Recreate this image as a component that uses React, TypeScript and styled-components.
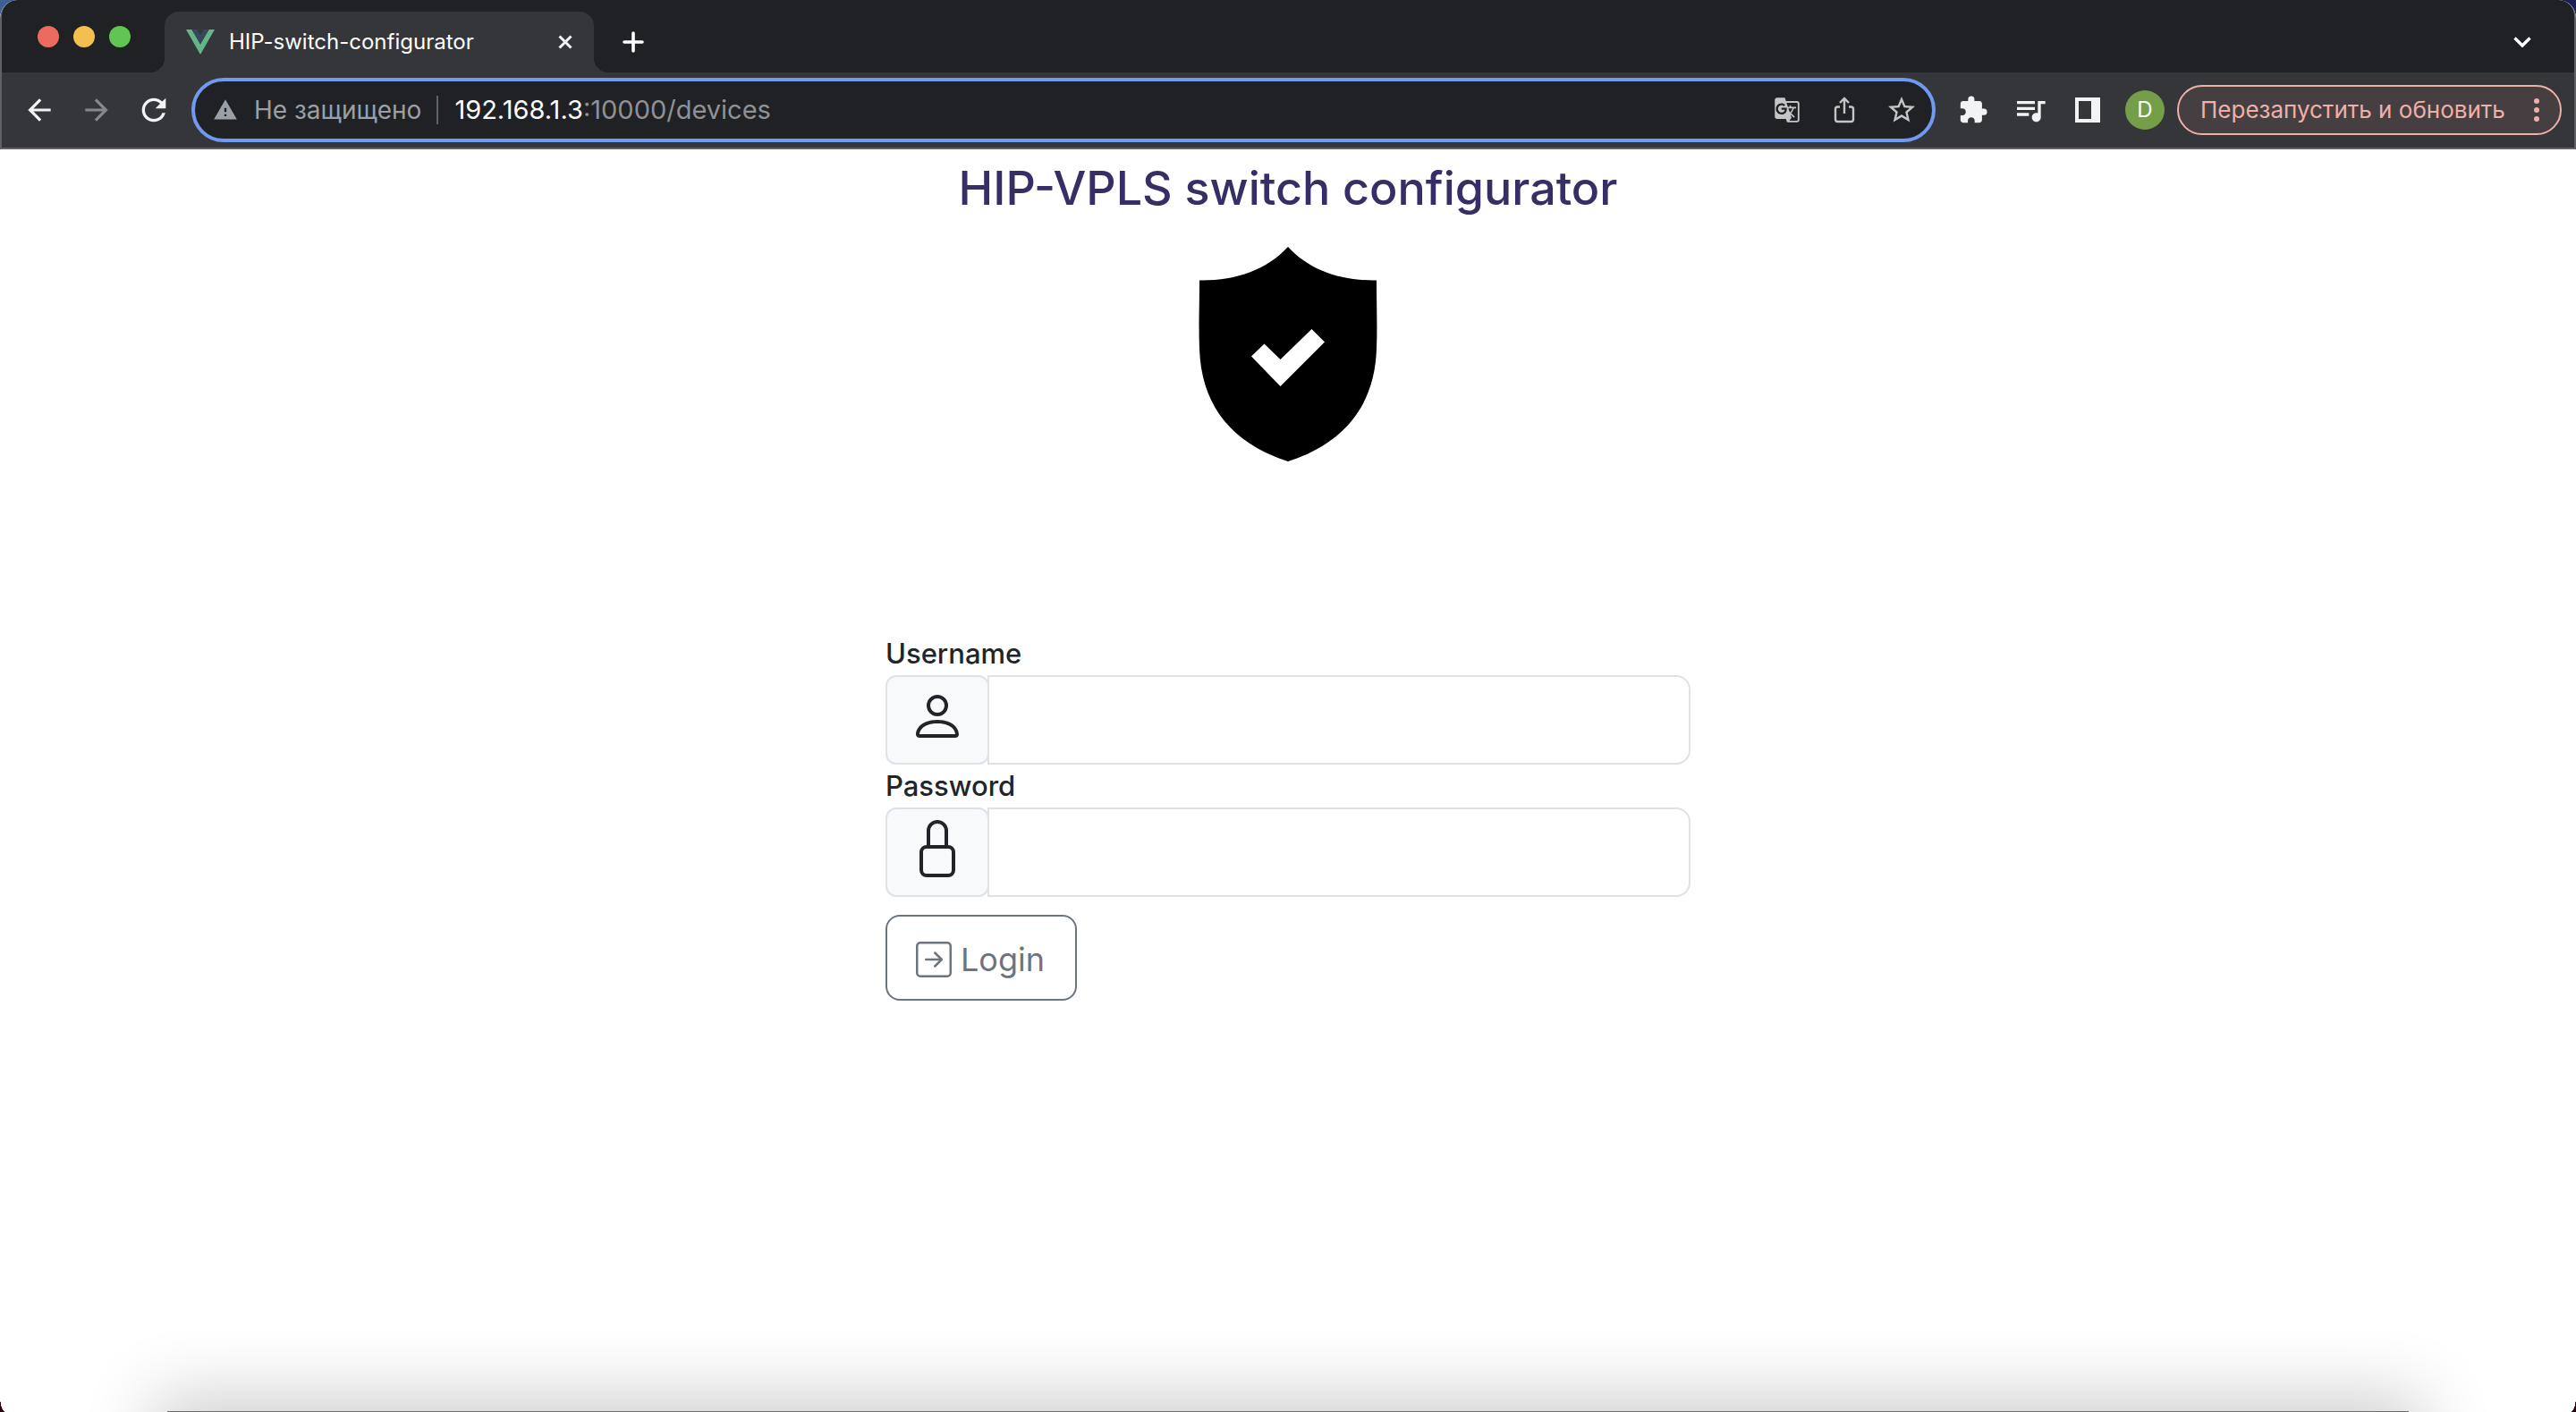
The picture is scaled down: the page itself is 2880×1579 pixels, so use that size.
import React from "react";
import styled, { createGlobalStyle, css } from "styled-components";
import { BsPerson, BsLock, BsArrowRightSquare } from "react-icons/bs";
import {
  MdArrowBack,
  MdArrowForward,
  MdRefresh,
  MdExtension,
  MdStarOutline,
  MdGTranslate,
  MdWarning,
  MdOutlineQueueMusic,
} from "react-icons/md";

const GlobalStyle = createGlobalStyle`
  *, *::before, *::after { box-sizing: border-box; }
  body {
    margin: 0;
    background: linear-gradient(90deg, #3c5f94 0%, #1c1f52 100%);
    font-family: Inter, "Liberation Sans", sans-serif;
  }
  button, input { font: inherit; }
`;

const Window = styled.div`
  position: relative;
  display: flex;
  flex-direction: column;
  min-height: 100vh;
  overflow: hidden;
  background: #fff;
  border-radius: 20px 20px 0 0;
`;

const Chrome = styled.header`
  background: #35363a;
  border: 2px solid #5f6165;
  border-top-width: 0;
  border-radius: 20px 20px 0 0;
`;

const TabStrip = styled.div`
  display: flex;
  align-items: flex-end;
  height: 81px;
  padding: 0 40px;
  background: #202124;
  border-radius: 18px 18px 0 0;
`;

const Lights = styled.div`
  display: flex;
  align-items: center;
  gap: 16px;
  height: 80px;
  margin-right: 38px;
`;

const Light = styled.button<{ $color: string }>`
  width: 24px;
  height: 24px;
  padding: 0;
  border: 0;
  border-radius: 50%;
  background: ${(p) => p.$color};
`;

const flare = css`
  content: "";
  position: absolute;
  bottom: 0;
  width: 16px;
  height: 16px;
`;

const Tab = styled.div`
  position: relative;
  display: flex;
  align-items: center;
  width: 480px;
  height: 68px;
  padding: 0 24px 0 24px;
  border-radius: 16px 16px 0 0;
  background: #35363a;
  color: #fff;
  &::before {
    ${flare}
    left: -16px;
    background: radial-gradient(circle at 0 0, transparent 16px, #35363a 16px);
  }
  &::after {
    ${flare}
    right: -16px;
    background: radial-gradient(circle at 100% 0, transparent 16px, #35363a 16px);
  }
`;

const TabTitle = styled.span`
  flex: 1;
  margin-left: 16px;
  font-size: 24px;
  line-height: 32px;
  white-space: nowrap;
`;

const IconButton = styled.button<{ $w?: number; $dim?: boolean }>`
  display: flex;
  flex: none;
  align-items: center;
  justify-content: center;
  width: ${(p) => p.$w ?? 64}px;
  height: 68px;
  padding: 0;
  border: 0;
  background: none;
  color: ${(p) => (p.$dim ? "#87888a" : "#f1f3f4")};
`;

const TabClose = styled(IconButton)`
  width: 16px;
  height: 32px;
`;

const StripSpacer = styled.div`
  flex: 1;
`;

const Toolbar = styled.div`
  display: flex;
  align-items: center;
  height: 84px;
  padding: 0 14px 0 10px;
`;

const Omnibox = styled.div`
  display: flex;
  flex: 1;
  align-items: center;
  height: 72px;
  margin: 0 10px 0 10px;
  padding: 0 2px 0 20px;
  border: 4px solid #709af0;
  border-radius: 36px;
  background: #202124;
  color: #9aa0a6;
  font-size: 28px;
  line-height: 36px;
`;

const Security = styled.span`
  margin-left: 18px;
  white-space: nowrap;
`;

const Divider = styled.span`
  width: 2px;
  height: 32px;
  margin: 0 18px 0 17px;
  background: #5f6368;
`;

const Address = styled.div`
  flex: 1;
  color: #909193;
  font-size: 29px;
  b {
    color: #fff;
    font-weight: 400;
  }
`;

const OmniAction = styled(IconButton)`
  color: #c4c5c6;
`;

const Avatar = styled.button`
  width: 44px;
  height: 44px;
  margin: 0 14px 0 10px;
  padding: 0;
  border: 0;
  border-radius: 50%;
  background: #759e48;
  color: #fff;
  font-size: 24px;
  line-height: 44px;
`;

const UpdateButton = styled.button`
  display: flex;
  align-items: center;
  justify-content: space-between;
  width: 430px;
  height: 56px;
  padding: 0 23px 0 24px;
  border: 2px solid #eeb0a9;
  border-radius: 28px;
  background: #453f42;
  color: #eeb0a9;
  font-size: 26px;
  line-height: 36px;
  white-space: nowrap;
`;

const Page = styled.main`
  display: flex;
  flex: 1;
  flex-direction: column;
  align-items: center;
  padding-top: 10px;
`;

const Title = styled.h1`
  margin: 0;
  color: #352f66;
  font-size: 52px;
  font-weight: 500;
  line-height: 68px;
`;

const Shield = styled.svg`
  display: block;
  width: 200px;
  height: 240px;
  margin: 31px 0 191px;
`;

const Form = styled.form`
  width: 900px;
  max-width: 100%;
  color: #212529;
`;

const Label = styled.label`
  display: block;
  font-size: 31px;
  font-weight: 500;
  line-height: 48px;
`;

const Group = styled.div`
  display: flex;
  height: 100px;
`;

const Addon = styled.span`
  flex: none;
  width: 116px;
  padding: 12px 24px;
  border: 2px solid #dee2e6;
  border-radius: 12px;
  background: #f8f9fa;
  svg { display: block; }
`;

const Field = styled.input`
  flex: 1;
  min-width: 0;
  margin-left: -2px;
  padding: 16px 32px;
  border: 2px solid #dee2e6;
  border-radius: 0 16px 16px 0;
  outline: 0;
  background: #fff;
  font-size: 40px;
`;

const LoginButton = styled.button`
  display: flex;
  align-items: center;
  gap: 10px;
  height: 96px;
  margin-top: 20px;
  padding: 4px 34px 0 32px;
  border: 2px solid #6c757d;
  border-radius: 16px;
  background: transparent;
  color: #6c757d;
  font-size: 36px;
  line-height: 60px;
`;

const DockShadow = styled.div`
  position: absolute;
  right: 187px;
  bottom: -99px;
  left: 187px;
  height: 100px;
  background: #6e6e6e;
  box-shadow: 0 0 80px 16px rgba(0, 0, 0, 0.2);
`;

const Corner = styled.span<{ $side: "left" | "right" }>`
  position: absolute;
  bottom: 0;
  ${(p) => p.$side}: 0;
  width: 6px;
  height: 18px;
  background: radial-gradient(
    ellipse 6px 18px at ${(p) => (p.$side === "left" ? "100%" : "0")} 0,
    transparent 98%,
    #2a0510 100%
  );
`;

const VueLogo = () => (
  <svg width="32" height="28" viewBox="0 0 32 28">
    <path fill="#64b587" d="M0 0h6.4L16 16.6 25.6 0H32L16 28z" />
    <path fill="#35495e" d="M6.4 0h5.9L16 6.4 19.7 0h5.9L16 16.6z" />
  </svg>
);

const Share = () => (
  <svg width="24" height="30" viewBox="0 0 24 30" fill="none" stroke="currentColor" strokeWidth="2.4">
    <path d="M7 11.5H4.5Q2 11.5 2 14v11.5Q2 28 4.5 28h15Q22 28 22 25.5V14q0-2.5-2.5-2.5H17" />
    <path d="M12 19V2.5M7 7l5-5 5 5" />
  </svg>
);

export default function App() {
  return (
    <>
      <GlobalStyle />
      <Window>
        <Chrome>
          <TabStrip>
            <Lights>
              <Light $color="#ed6a5e" aria-label="Close window" />
              <Light $color="#f5bf4f" aria-label="Minimize window" />
              <Light $color="#61c554" aria-label="Zoom window" />
            </Lights>
            <Tab>
              <VueLogo />
              <TabTitle>HIP-switch-configurator</TabTitle>
              <TabClose aria-label="Close tab">
                <svg width="16" height="16" viewBox="0 0 16 16" stroke="currentColor" strokeWidth="3">
                  <path d="M1.5 1.5l13 13M14.5 1.5l-13 13" />
                </svg>
              </TabClose>
            </Tab>
            <IconButton $w={88} aria-label="New tab">
              <svg width="24" height="24" viewBox="0 0 24 24" stroke="#fff" strokeWidth="3.6" strokeLinecap="round">
                <path d="M12 2v20M2 12h20" />
              </svg>
            </IconButton>
            <StripSpacer />
            <IconButton $w={36} aria-label="Search tabs">
              <svg width="20" height="12" viewBox="0 0 20 12" fill="none" stroke="#fff" strokeWidth="3.4">
                <path d="M1.5 1.5L10 10l8.5-8.5" />
              </svg>
            </IconButton>
          </TabStrip>
          <Toolbar>
            <IconButton aria-label="Back"><MdArrowBack size={38} /></IconButton>
            <IconButton $dim aria-label="Forward"><MdArrowForward size={38} /></IconButton>
            <IconButton aria-label="Reload"><MdRefresh size={40} /></IconButton>
            <Omnibox>
              <MdWarning size={28} />
              <Security>Не защищено</Security>
              <Divider />
              <Address><b>192.168.1.3</b>:10000/devices</Address>
              <OmniAction aria-label="Translate"><MdGTranslate size={30} /></OmniAction>
              <OmniAction aria-label="Share"><Share /></OmniAction>
              <OmniAction aria-label="Bookmark"><MdStarOutline size={36} /></OmniAction>
            </Omnibox>
            <IconButton aria-label="Extensions"><MdExtension size={34} /></IconButton>
            <IconButton aria-label="Media"><MdOutlineQueueMusic size={40} /></IconButton>
            <IconButton aria-label="Side panel">
              <svg width="28" height="28" viewBox="0 0 28 28">
                <path fill="currentColor" fillRule="evenodd" d="M0 0h28v28H0zM4 4v20h14V4z" />
              </svg>
            </IconButton>
            <Avatar>D</Avatar>
            <UpdateButton>
              Перезапустить и обновить
              <svg width="6" height="26" viewBox="0 0 6 26" fill="currentColor">
                <circle cx="3" cy="3" r="3" />
                <circle cx="3" cy="13" r="3" />
                <circle cx="3" cy="23" r="3" />
              </svg>
            </UpdateButton>
          </Toolbar>
        </Chrome>
        <Page>
          <Title>HIP-VPLS switch configurator</Title>
          <Shield viewBox="0 0 200 240">
            <path d="M100 0C124 26 158 38 199 37.5C199 70 200 90 199 114C197 178 162 220 100 240C38 220 3 178 1 114C0 90 1 70 1 37.5C42 38 76 26 100 0z" />
            <path fill="#fff" d="M59 122.5L73.5 108.5L91.5 126L126.5 92L141 106.5L91.5 156z" />
          </Shield>
          <Form onSubmit={(e: React.FormEvent) => e.preventDefault()}>
            <Label htmlFor="username">Username</Label>
            <Group>
              <Addon><BsPerson size={64} /></Addon>
              <Field id="username" type="text" />
            </Group>
            <Label htmlFor="password">Password</Label>
            <Group>
              <Addon><BsLock size={64} /></Addon>
              <Field id="password" type="password" />
            </Group>
            <LoginButton type="submit">
              <BsArrowRightSquare size={40} />
              Login
            </LoginButton>
          </Form>
        </Page>
        <DockShadow />
        <Corner $side="left" />
        <Corner $side="right" />
      </Window>
    </>
  );
}
